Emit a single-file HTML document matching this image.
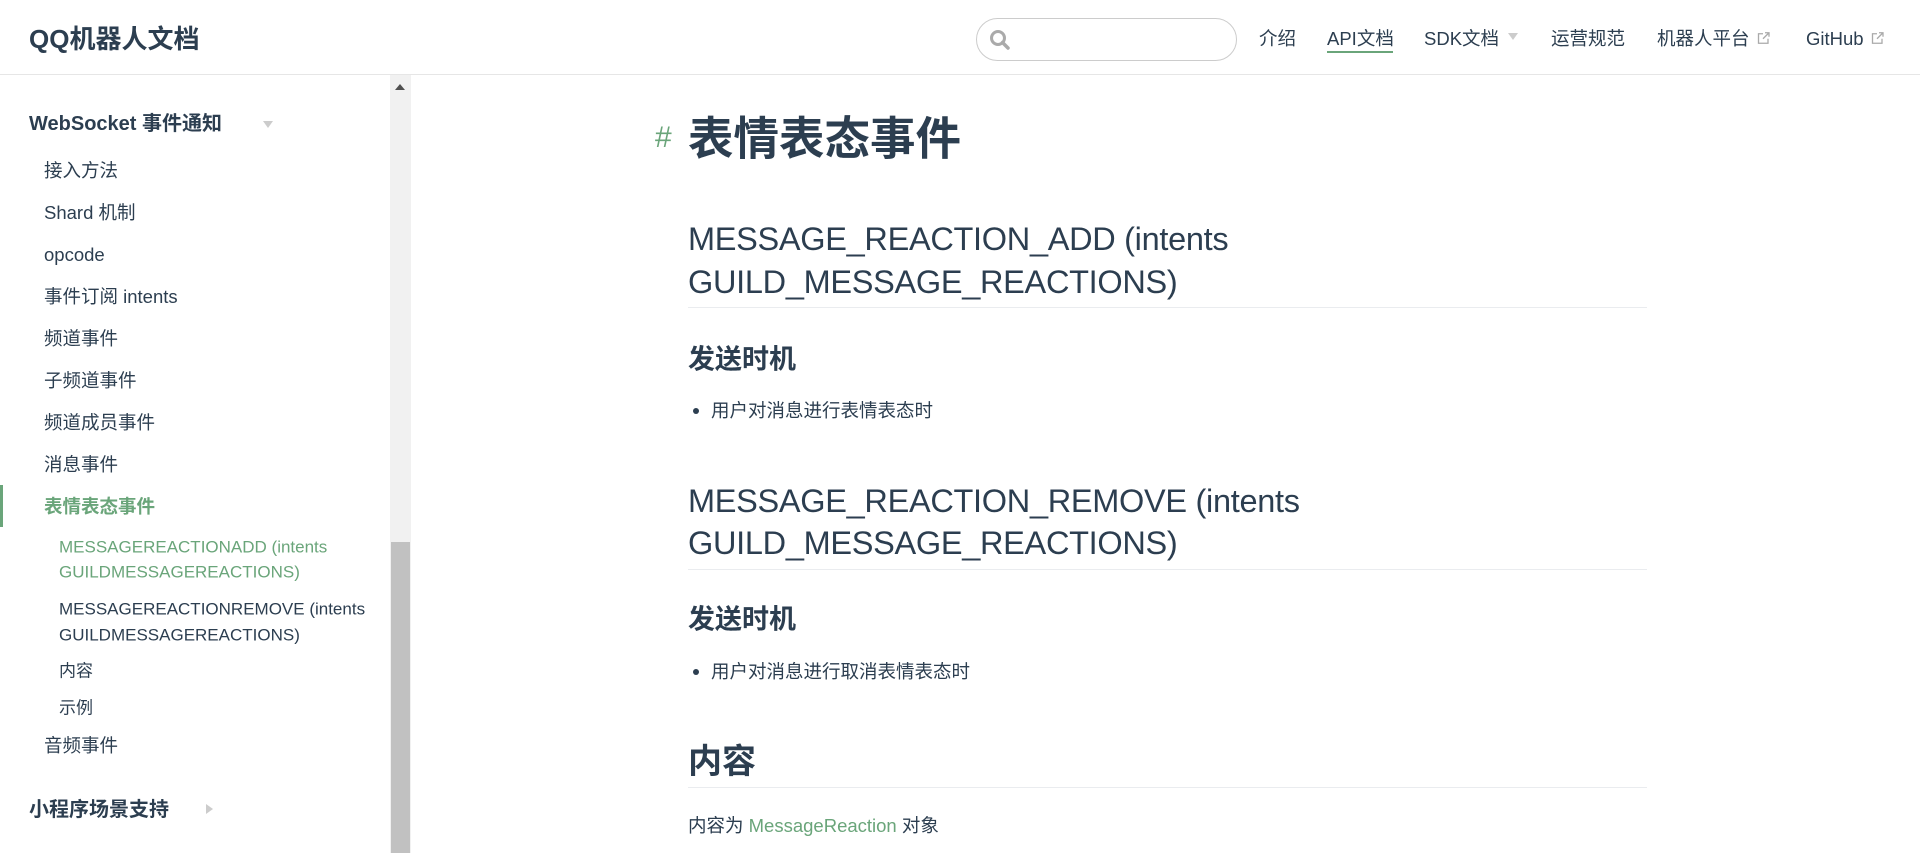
<!DOCTYPE html>
<html><head><meta charset="utf-8"><style>
*{margin:0;padding:0;box-sizing:border-box}
body{width:1920px;height:853px;overflow:hidden;background:#fff;font-family:"Liberation Sans","Noto Sans CJK SC",sans-serif;color:#2c3e50;position:relative}
.a{position:absolute;white-space:nowrap;line-height:1}
.hdr{position:absolute;left:0;top:0;width:1920px;height:75px;border-bottom:1px solid #e6e6e6;background:#fff}
.nav{font-size:18.5px;color:#2c3e50;transform:translateY(-50%)}
.side{font-size:18.5px;color:#2c3e50;transform:translateY(-50%)}
.sub{font-size:17px;transform:translateY(-50%)}
.g{color:#6aa57a}
.h2{font-size:32.5px;color:#2c3e50;transform:translateY(-50%);letter-spacing:-0.3px}
.h3{font-size:27px;font-weight:bold;transform:translateY(-50%)}
.p{font-size:18.5px;transform:translateY(-50%)}
.line{position:absolute;left:688px;width:959px;height:1px;background:#eaecef}
.ext{margin-left:7px;vertical-align:middle;position:relative;top:-2px}
</style></head><body>
<div class="hdr"></div>
<div class="a" style="left:29px;top:39px;font-size:26px;font-weight:bold;transform:translateY(-50%)">QQ机器人文档</div>
<div style="position:absolute;left:976px;top:18px;width:261px;height:43px;border:1px solid #ccc;border-radius:22px"></div>
<svg style="position:absolute;left:989px;top:29px" width="22" height="22" viewBox="0 0 22 22"><circle cx="9" cy="9" r="6.5" fill="none" stroke="#aaa" stroke-width="3"/><line x1="13.5" y1="13.5" x2="19" y2="19" stroke="#aaa" stroke-width="3.5" stroke-linecap="round"/></svg>
<div class="a nav" style="left:1259px;top:39px">介绍</div>
<div class="a nav" style="left:1327px;top:39px">API文档</div>
<div style="position:absolute;left:1327px;top:51px;width:66px;height:2px;background:#6aa57a"></div>
<div class="a nav" style="left:1424px;top:39px">SDK文档</div>
<div class="a" style="left:1508px;top:33px;width:0;height:0;border-left:5px solid transparent;border-right:5px solid transparent;border-top:7px solid #ccc"></div>
<div class="a nav" style="left:1551px;top:39px">运营规范</div>
<div class="a nav" style="left:1657px;top:39px">机器人平台<svg class="ext" width="13" height="13" viewBox="0 0 13 13"><path d="M6 2H1.5v9.5H11V7" fill="none" stroke="#aaa" stroke-width="1.3"/><path d="M8 1h4v4M12 1L6 7" fill="none" stroke="#aaa" stroke-width="1.3"/></svg></div>
<div class="a nav" style="left:1806px;top:39px">GitHub<svg class="ext" width="13" height="13" viewBox="0 0 13 13"><path d="M6 2H1.5v9.5H11V7" fill="none" stroke="#aaa" stroke-width="1.3"/><path d="M8 1h4v4M12 1L6 7" fill="none" stroke="#aaa" stroke-width="1.3"/></svg></div>

<div style="position:absolute;left:390px;top:75px;width:21px;height:778px;background:#f1f1f1"></div>
<div style="position:absolute;left:391px;top:542px;width:19px;height:311px;background:#c1c1c1"></div>
<div class="a" style="left:395px;top:84px;width:0;height:0;border-left:5px solid transparent;border-right:5px solid transparent;border-bottom:6px solid #505050"></div>

<div class="a" style="left:29px;top:124px;font-size:20px;font-weight:bold;transform:translateY(-50%)">WebSocket 事件通知</div>
<div class="a" style="left:263px;top:121px;width:0;height:0;border-left:5px solid transparent;border-right:5px solid transparent;border-top:7px solid #ccc"></div>
<div class="a side" style="left:44px;top:171px">接入方法</div>
<div class="a side" style="left:44px;top:213px">Shard 机制</div>
<div class="a side" style="left:44px;top:255px">opcode</div>
<div class="a side" style="left:44px;top:297px">事件订阅 intents</div>
<div class="a side" style="left:44px;top:339px">频道事件</div>
<div class="a side" style="left:44px;top:381px">子频道事件</div>
<div class="a side" style="left:44px;top:423px">频道成员事件</div>
<div class="a side" style="left:44px;top:465px">消息事件</div>
<div style="position:absolute;left:0;top:485px;width:3px;height:42px;background:#6aa57a"></div>
<div class="a side g" style="left:44px;top:507px;font-weight:bold">表情表态事件</div>
<div class="a sub g" style="left:59px;top:547px">MESSAGEREACTIONADD (intents</div>
<div class="a sub g" style="left:59px;top:572px">GUILDMESSAGEREACTIONS)</div>
<div class="a sub" style="left:59px;top:609px">MESSAGEREACTIONREMOVE (intents</div>
<div class="a sub" style="left:59px;top:635px">GUILDMESSAGEREACTIONS)</div>
<div class="a sub" style="left:59px;top:671px">内容</div>
<div class="a sub" style="left:59px;top:708px">示例</div>
<div class="a side" style="left:44px;top:746px">音频事件</div>
<div class="a" style="left:29px;top:810px;font-size:20px;font-weight:bold;transform:translateY(-50%)">小程序场景支持</div>
<div class="a" style="left:206px;top:804px;width:0;height:0;border-top:5px solid transparent;border-bottom:5px solid transparent;border-left:7px solid #ccc"></div>

<div class="a g" style="left:655px;top:138px;font-size:30px;transform:translateY(-50%)">#</div>
<div class="a" style="left:688px;top:139px;font-size:45.5px;font-weight:bold;transform:translateY(-50%)">表情表态事件</div>
<div class="a h2" style="left:688px;top:239px">MESSAGE_REACTION_ADD (intents</div>
<div class="a h2" style="left:688px;top:282px">GUILD_MESSAGE_REACTIONS)</div>
<div class="line" style="top:307px"></div>
<div class="a h3" style="left:688px;top:360px">发送时机</div>
<div class="a" style="left:693px;top:408px;width:6px;height:6px;border-radius:50%;background:#2c3e50"></div>
<div class="a p" style="left:711px;top:411px">用户对消息进行表情表态时</div>
<div class="a h2" style="left:688px;top:501px">MESSAGE_REACTION_REMOVE (intents</div>
<div class="a h2" style="left:688px;top:543px">GUILD_MESSAGE_REACTIONS)</div>
<div class="line" style="top:569px"></div>
<div class="a h3" style="left:688px;top:620px">发送时机</div>
<div class="a" style="left:693px;top:669px;width:6px;height:6px;border-radius:50%;background:#2c3e50"></div>
<div class="a p" style="left:711px;top:672px">用户对消息进行取消表情表态时</div>
<div class="a" style="left:688px;top:762px;font-size:34px;font-weight:bold;transform:translateY(-50%)">内容</div>
<div class="line" style="top:787px"></div>
<div class="a p" style="left:688px;top:826px">内容为 <span class="g">MessageReaction</span> 对象</div>
</body></html>
